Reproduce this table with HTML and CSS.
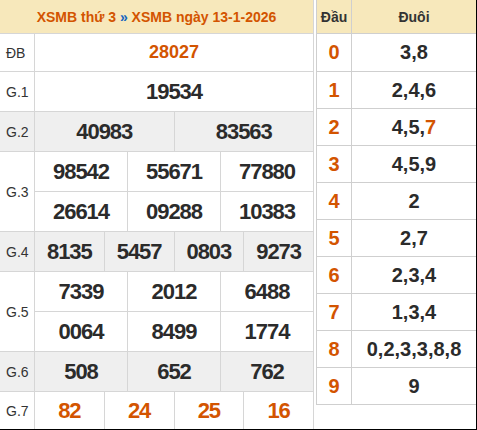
FILE: index.html
```html
<!DOCTYPE html>
<html lang="vi">
<head>
<meta charset="utf-8">
<title>XSMB 13-1-2026</title>
<link rel="stylesheet" href="styles.css">
</head>
<body>
<div class="board">
  <div class="kq">
    <div class="kq-head">XSMB thứ 3 <span class="sep">»</span> XSMB ngày 13-1-2026</div>
    <div class="row h37">
      <div class="lbl">ĐB</div>
      <div class="cells"><div class="cell db">28027</div></div>
    </div>
    <div class="row h39">
      <div class="lbl">G.1</div>
      <div class="cells"><div class="cell">19534</div></div>
    </div>
    <div class="row h39 alt">
      <div class="lbl">G.2</div>
      <div class="cells"><div class="cell">40983</div><div class="cell">83563</div></div>
    </div>
    <div class="row">
      <div class="lbl">G.3</div>
      <div class="sub">
        <div class="cells"><div class="cell">98542</div><div class="cell">55671</div><div class="cell">77880</div></div>
        <div class="cells"><div class="cell">26614</div><div class="cell">09288</div><div class="cell">10383</div></div>
      </div>
    </div>
    <div class="row h39 alt">
      <div class="lbl">G.4</div>
      <div class="cells"><div class="cell">8135</div><div class="cell">5457</div><div class="cell">0803</div><div class="cell">9273</div></div>
    </div>
    <div class="row">
      <div class="lbl">G.5</div>
      <div class="sub">
        <div class="cells"><div class="cell">7339</div><div class="cell">2012</div><div class="cell">6488</div></div>
        <div class="cells"><div class="cell">0064</div><div class="cell">8499</div><div class="cell">1774</div></div>
      </div>
    </div>
    <div class="row h39 alt">
      <div class="lbl">G.6</div>
      <div class="cells"><div class="cell">508</div><div class="cell">652</div><div class="cell">762</div></div>
    </div>
    <div class="row h37 last">
      <div class="lbl">G.7</div>
      <div class="cells"><div class="cell hot">82</div><div class="cell hot">24</div><div class="cell hot">25</div><div class="cell hot">16</div></div>
    </div>
  </div>

  <div class="lt">
    <div class="lt-row lt-head"><div class="dau">Đầu</div><div class="duoi">Đuôi</div></div>
    <div class="lt-row first"><div class="dau">0</div><div class="duoi">3,8</div></div>
    <div class="lt-row"><div class="dau">1</div><div class="duoi">2,4,6</div></div>
    <div class="lt-row"><div class="dau">2</div><div class="duoi">4,5,<span class="hot">7</span></div></div>
    <div class="lt-row"><div class="dau">3</div><div class="duoi">4,5,9</div></div>
    <div class="lt-row"><div class="dau">4</div><div class="duoi">2</div></div>
    <div class="lt-row"><div class="dau">5</div><div class="duoi">2,7</div></div>
    <div class="lt-row"><div class="dau">6</div><div class="duoi">2,3,4</div></div>
    <div class="lt-row"><div class="dau">7</div><div class="duoi">1,3,4</div></div>
    <div class="lt-row"><div class="dau">8</div><div class="duoi">0,2,3,3,8,8</div></div>
    <div class="lt-row"><div class="dau">9</div><div class="duoi">9</div></div>
  </div>
</div>
</body>
</html>
```

FILE: styles.css
```css
html, body {
  margin: 0;
  padding: 0;
  background: #fff;
}

body {
  font-family: "Liberation Sans", Arial, sans-serif;
  color: #2b2b2b;
}

.board {
  display: flex;
  align-items: flex-start;
  width: 476px;
  height: 429px;
  border-right: 1px solid #000;
  border-bottom: 1px solid #000;
  overflow: hidden;
}

/* ---------- results table ---------- */
.kq {
  width: 314px;
  height: 429px;
  box-sizing: border-box;
  border-right: 1px solid #d6d6d6;
  margin-right: 2px;
  flex: none;
}

.kq-head {
  height: 33px;
  border-bottom: 1px solid #d6d6d6;
  background: #f7e8bb;
  color: #d35400;
  font-weight: bold;
  font-size: 14px;
  display: flex;
  align-items: center;
  justify-content: center;
  white-space: pre;
}

.sep {
  color: #1565c0;
}

.row {
  display: flex;
  border-bottom: 1px solid #d6d6d6;
}

.row.last {
  border-bottom: none;
}

.h37 { height: 37px; }
.h39 { height: 39px; }

.alt {
  background: #efefef;
}

.lbl {
  width: 35px;
  box-sizing: border-box;
  border-right: 1px solid #d6d6d6;
  padding-left: 6px;
  display: flex;
  align-items: center;
  font-size: 14px;
  color: #333;
  flex: none;
}

.sub {
  flex: 1;
  display: flex;
  flex-direction: column;
}

.sub .cells {
  height: 39px;
  flex: none;
}

.sub .cells + .cells {
  border-top: 1px solid #d6d6d6;
}

.cells {
  flex: 1;
  display: flex;
}

.cell {
  flex: 1 1 0;
  display: flex;
  align-items: center;
  justify-content: center;
  font-weight: bold;
  font-size: 22px;
  letter-spacing: -1px;
  color: #2b2b2b;
}

.cell + .cell {
  border-left: 1px solid #d6d6d6;
}

.cell.db {
  font-size: 18px;
  letter-spacing: 0;
  color: #d35400;
}

.hot {
  color: #d35400;
}

.cell.hot {
  color: #d35400;
}

/* ---------- loto table ---------- */
.lt {
  flex: 1;
  border-left: 1px solid #cfcfcf;
}

.lt-row {
  display: flex;
  height: 36px;
  border-bottom: 1px solid #cfcfcf;
  font-weight: bold;
  font-size: 20px;
}

.lt-row.first {
  height: 37px;
}

.lt-row.lt-head {
  height: 33px;
  background: #f7e8bb;
  font-size: 14px;
  color: #333;
}

.dau {
  width: 35px;
  box-sizing: border-box;
  border-right: 1px solid #cfcfcf;
  display: flex;
  align-items: center;
  justify-content: center;
  color: #d35400;
  flex: none;
}

.lt-head .dau {
  color: #333;
}

.duoi {
  flex: 1;
  display: flex;
  align-items: center;
  justify-content: center;
  color: #2b2b2b;
}

.lt-head .duoi {
  color: #333;
}
```
